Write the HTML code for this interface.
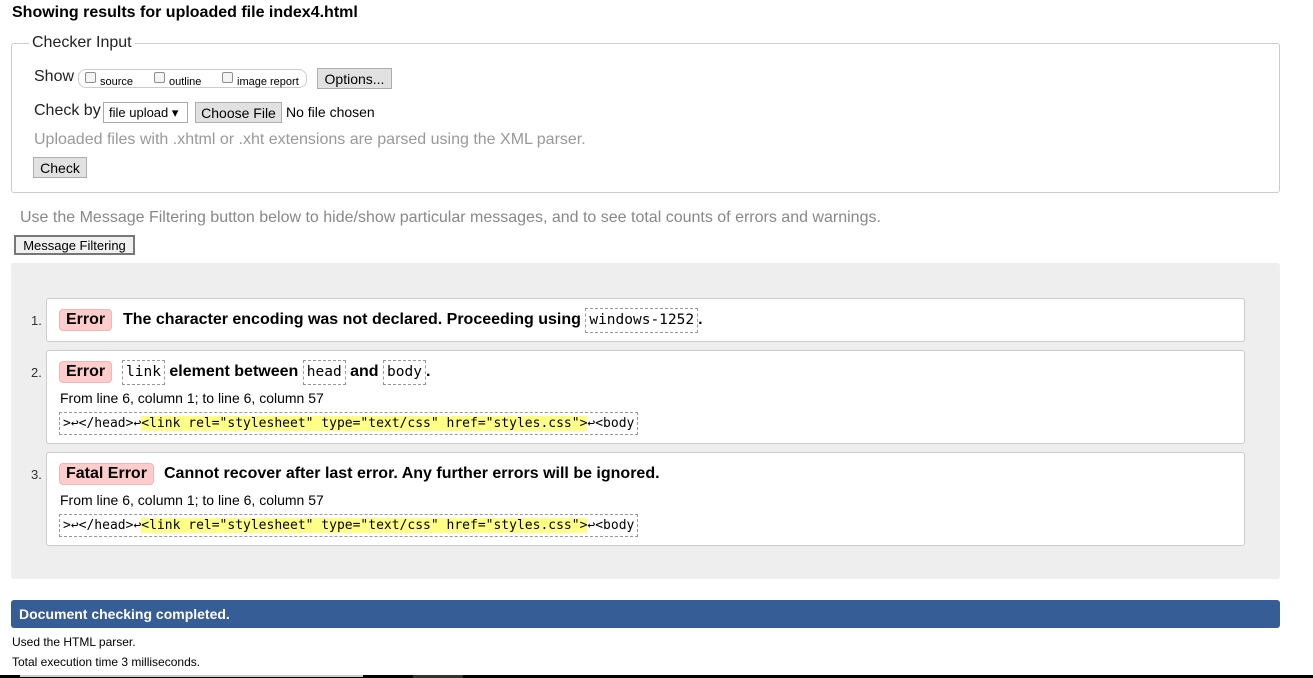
<!DOCTYPE html>
<html><head><meta charset="utf-8"><style>
*{box-sizing:border-box;margin:0;padding:0}
body{width:1313px;height:678px;overflow:hidden;background:#fff;font-family:"Liberation Sans",Arial,sans-serif;color:#000;position:relative}
.a{position:absolute;white-space:nowrap}
.btn{position:absolute;background:#e1e1e1;border:1px solid #adadad;font-size:13px;display:flex;align-items:center;justify-content:center}
.cb{display:inline-block;width:11px;height:11px;border:1px solid #8f8f8f;border-radius:2px;background:#f4f4f4;vertical-align:2px;margin-right:4px}
.msg{position:absolute;left:46px;width:1199px;background:#fff;border:1px solid #ccc;border-radius:3px}
.num{position:absolute;left:31px;font-size:13px;color:#333}
.lab{position:absolute;background:#fcc;border:1px solid #f0b5b5;border-radius:4px;font-weight:bold;font-size:16px;padding:0 6px;height:22px;line-height:20px;color:#000}
.t{font-weight:bold;font-size:16px}
code{font-family:"DejaVu Sans Mono","Liberation Mono",monospace;font-size:14.5px;border:1px dashed #999;padding:3px 3px 4px;font-weight:normal}
.ext{position:absolute;left:59px;height:23px;border:1px dashed #999;font-family:"DejaVu Sans Mono","Liberation Mono",monospace;font-size:13px;line-height:21px;padding:0 3px;white-space:nowrap}
.hl{background:#ff8}
.loc{position:absolute;left:60px;font-size:14px}
</style></head><body>
<div class="a" style="left:12px;top:4px;font-size:16px;font-weight:bold">Showing results for uploaded file index4.html</div>

<div class="a" style="left:11px;top:43px;width:1269px;height:150px;border:1px solid #ccc;border-radius:3px"></div>
<div class="a" style="left:29px;top:34px;font-size:16px;background:#fff;padding:0 3px;color:#222">Checker Input</div>

<div class="a" style="left:34px;top:68px;font-size:16px;color:#222">Show</div>
<div class="a" style="left:78px;top:69px;width:229px;height:19px;border:1px solid #ccc;border-radius:8px"></div>
<div class="a" style="left:85px;top:72px;font-size:11px"><span class="cb"></span>source</div>
<div class="a" style="left:154px;top:72px;font-size:11px"><span class="cb"></span>outline</div>
<div class="a" style="left:222px;top:72px;font-size:11px"><span class="cb"></span>image report</div>
<div class="btn" style="left:317px;top:68px;width:75px;height:21px;font-size:14px">Options...</div>

<div class="a" style="left:34px;top:102px;font-size:16px;color:#222">Check by</div>
<div class="a" style="left:103px;top:102px;width:85px;height:21px;border:1px solid #a9a9a9;font-size:13px;padding:2px 0 0 5px">file upload ▾</div>
<div class="btn" style="left:195px;top:102px;width:87px;height:21px;font-size:14px">Choose File</div>
<div class="a" style="left:286px;top:104px;font-size:14px">No file chosen</div>

<div class="a" style="left:34px;top:131px;font-size:16px;color:#999">Uploaded files with .xhtml or .xht extensions are parsed using the XML parser.</div>
<div class="btn" style="left:33px;top:157px;width:54px;height:21px;font-size:14px">Check</div>

<div class="a" style="left:20px;top:209px;font-size:16px;color:#888">Use the Message Filtering button below to hide/show particular messages, and to see total counts of errors and warnings.</div>
<div class="btn" style="left:14px;top:235px;width:121px;height:20px;background:#f0f0f0;border:2px solid #777;font-size:13px">Message Filtering</div>

<div class="a" style="left:11px;top:263px;width:1269px;height:316px;background:#eee;border-radius:3px"></div>

<div class="msg" style="top:298px;height:44px"></div>
<div class="num" style="top:313px">1.</div>
<div class="lab" style="left:59px;top:309px">Error</div>
<div class="a t" style="left:123px;top:311px">The character encoding was not declared. Proceeding using <code>windows-1252</code>.</div>

<div class="msg" style="top:350px;height:94px"></div>
<div class="num" style="top:365px">2.</div>
<div class="lab" style="left:59px;top:361px">Error</div>
<div class="a t" style="left:122px;top:363px"><code>link</code> element between <code>head</code> and <code>body</code>.</div>
<div class="loc" style="top:390px">From line 6, column 1; to line 6, column 57</div>
<div class="ext" style="top:412px">&gt;↩&lt;/head&gt;↩<span class="hl">&lt;link rel="stylesheet" type="text/css" href="styles.css"&gt;</span>↩&lt;body</div>

<div class="msg" style="top:452px;height:94px"></div>
<div class="num" style="top:467px">3.</div>
<div class="lab" style="left:59px;top:463px">Fatal Error</div>
<div class="a t" style="left:164px;top:465px">Cannot recover after last error. Any further errors will be ignored.</div>
<div class="loc" style="top:492px">From line 6, column 1; to line 6, column 57</div>
<div class="ext" style="top:514px">&gt;↩&lt;/head&gt;↩<span class="hl">&lt;link rel="stylesheet" type="text/css" href="styles.css"&gt;</span>↩&lt;body</div>

<div class="a" style="left:11px;top:600px;width:1269px;height:28px;background:#365d95;border-radius:3px;color:#fff;font-weight:bold;font-size:14px;padding:6px 0 0 8px">Document checking completed.</div>
<div class="a" style="left:12px;top:635px;font-size:12px">Used the HTML parser.</div>
<div class="a" style="left:12px;top:655px;font-size:12px">Total execution time 3 milliseconds.</div>

<div class="a" style="left:0;top:675px;width:1313px;height:3px;background:#000"></div>
<div class="a" style="left:20px;top:675px;width:343px;height:2px;background:#ccc"></div>
<div class="a" style="left:413px;top:675px;width:50px;height:3px;background:#333"></div>
</body></html>
